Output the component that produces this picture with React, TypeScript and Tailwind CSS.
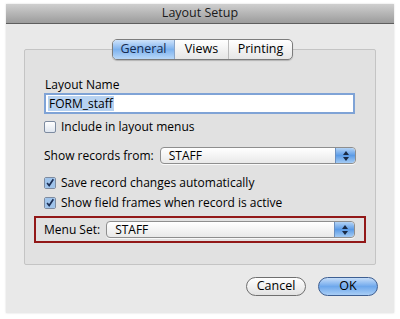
import React from "react";

const font = { fontFamily: '"Open Sans", "DejaVu Sans", sans-serif' };

function Stepper() {
  return (
    <div className="w-[20px] self-stretch rounded-r-[4px] bg-gradient-to-b from-[#b3d3f5] via-[#5b9be6] to-[#a4cbf3] border-l border-[#6a8fbf] flex items-center justify-center">
      <svg width="8" height="12" viewBox="0 0 8 12">
        <path d="M4 1 L7 5 L1 5 Z" fill="#1a2a44" />
        <path d="M4 11 L7 7 L1 7 Z" fill="#1a2a44" />
      </svg>
    </div>
  );
}

function Popup({ label }: { label: string }) {
  return (
    <div className="flex-1 h-[17px] flex items-stretch rounded-[4px] border border-[#8e8e8e] bg-gradient-to-b from-white to-[#e9e9e9] shadow-[0_1px_0_rgba(255,255,255,0.8)]">
      <div className="flex-1 pl-[8px] text-[12px] leading-[15px] text-black">{label}</div>
      <Stepper />
    </div>
  );
}

function Check({ checked, label }: { checked?: boolean; label: string }) {
  return (
    <div className="flex items-center gap-[5px] text-[12px] leading-[15px] text-black">
      <div className="w-[12px] h-[12px] rounded-[2px] border border-[#7d8ba0] bg-gradient-to-b from-white to-[#dfe6ef] flex items-center justify-center overflow-hidden">
        {checked && (
          <svg width="12" height="12" viewBox="0 0 12 12">
            <rect x="0" y="0" width="12" height="12" fill="#9fc3ea" />
            <path d="M2.5 6 L5 9 L10 1.5" stroke="#1b2f55" strokeWidth="2" fill="none" />
          </svg>
        )}
      </div>
      <span>{label}</span>
    </div>
  );
}

export default function App() {
  return (
    <div className="w-[400px] h-[319px] bg-white pt-[4px] pl-[6px]" style={font}>
      <div className="w-[388px] h-[309px] bg-[#e9e9e9] flex flex-col shadow-[0_0_2px_rgba(0,0,0,0.15)]">
        <div className="h-[20px] bg-gradient-to-b from-[#cfcfcf] to-[#9c9c9c] border-b border-[#5e5e5e] flex items-center justify-center text-[12.5px] text-[#1a1a1a]">
          Layout Setup
        </div>
        <div className="relative flex-1 flex flex-col">
          <div className="mt-[25px] mx-[18px] h-[216px] border border-[#c4c4c4] bg-[#e1e1e1] rounded-[2px] flex flex-col pt-[27px] px-[19px]">
            <div className="text-[12px] leading-[15px] text-black pl-[1px]">Layout Name</div>
            <div className="mt-[1px] mr-[1px] h-[21px] border-2 border-[#7fa3d6] bg-white flex items-center pl-[2px] text-[12px] leading-[15px]">
              <span className="bg-[#b7d2f1] px-[1px]">FORM_staff</span>
            </div>
            <div className="mt-[5px]">
              <Check label="Include in layout menus" />
            </div>
            <div className="mt-[13px] flex items-center gap-[6px]">
              <span className="text-[12px] leading-[15px] text-black">Show records from:</span>
              <Popup label="STAFF" />
            </div>
            <div className="mt-[11px] flex flex-col gap-[5px]">
              <Check checked label="Save record changes automatically" />
              <Check checked label="Show field frames when record is active" />
            </div>
            <div className="mt-[6px] -mx-[10px] border-[2px] border-[#921818] h-[27px] flex items-center pl-[8px] pr-[9px] gap-[6px]">
              <span className="text-[12px] leading-[15px] text-black">Menu Set:</span>
              <Popup label="STAFF" />
            </div>
          </div>
          <div className="absolute left-[106px] top-[15px] flex h-[21px] rounded-[5px] border border-[#7c7c7c] bg-gradient-to-b from-white to-[#e6e6e6] text-[12.5px] overflow-hidden shadow-[0_1px_1px_rgba(0,0,0,0.2)]">
            <div className="w-[62px] flex items-center justify-center bg-gradient-to-b from-[#cfe3fa] via-[#7db2ee] to-[#b9d8f8] text-[#152a4f] border-r border-[#8aa5c8]">General</div>
            <div className="w-[54px] flex items-center justify-center text-black border-r border-[#bbb]">Views</div>
            <div className="w-[63px] flex items-center justify-center text-black">Printing</div>
          </div>
          <div className="flex justify-end gap-[12px] mt-[12px] mr-[16px]">
            <div className="w-[60px] h-[19px] rounded-full border border-[#6f6f6f] bg-gradient-to-b from-white to-[#e2e2e2] flex items-center justify-center text-[12.5px] text-black">Cancel</div>
            <div className="w-[60px] h-[19px] rounded-full border border-[#3e5f92] bg-gradient-to-b from-[#c6ddf8] via-[#6ea8ec] to-[#a8cdf5] flex items-center justify-center text-[12.5px] text-black">OK</div>
          </div>
        </div>
      </div>
    </div>
  );
}
